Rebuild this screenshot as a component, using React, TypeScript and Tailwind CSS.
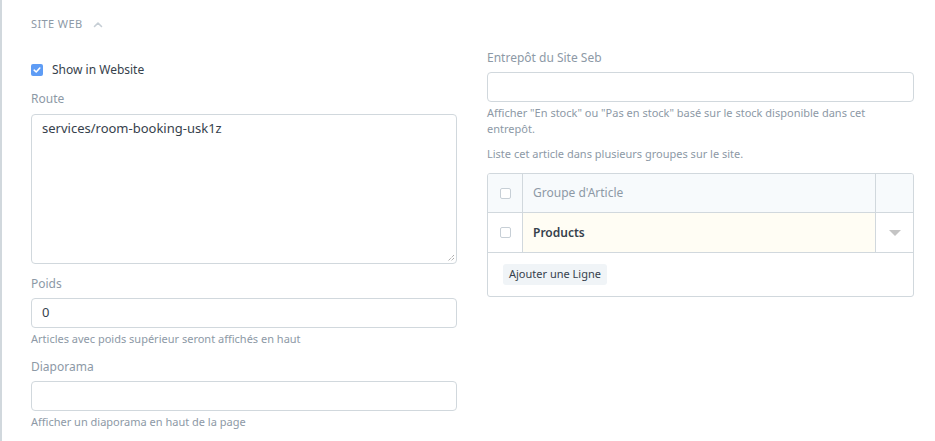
import React from 'react';

const font = { fontFamily: '"Noto Sans", "Open Sans", sans-serif' };

// Champ texte simple avec libellé et aide
const Field: React.FC<{ label: string; value?: string; help?: React.ReactNode }> = ({ label, value, help }) => (
  <div className="mb-[12px]">
    <div className="text-[12px] leading-[16px] text-[#8d99a6] mb-[6px]">{label}</div>
    <div className="h-[30px] rounded-[4px] border border-[#d1d8dd] bg-white px-[10px] flex items-center text-[13px] text-[#36414c]">
      {value}
    </div>
    {help && <div className="mt-[3px] text-[11px] leading-[16px] text-[#8d99a6]">{help}</div>}
  </div>
);

const Box: React.FC<{ checked?: boolean }> = ({ checked }) =>
  checked ? (
    <span className="w-[12px] h-[12px] rounded-[2px] bg-[#5e9cf5] flex items-center justify-center">
      <svg width="8" height="8" viewBox="0 0 8 8" fill="none">
        <path d="M1.2 4.2 L3.2 6 L6.8 2" stroke="white" strokeWidth="1.6" strokeLinecap="round" strokeLinejoin="round" />
      </svg>
    </span>
  ) : (
    <span className="w-[11px] h-[11px] rounded-[2px] border border-[#c7cfd6] bg-white" />
  );

export default function App() {
  return (
    <div style={font} className="w-[935px] h-[441px] bg-white overflow-hidden">
      <div className="h-full border-l-2 border-[#d1d8dd] pl-[29px] pr-[21px]">
        {/* en-tête de section */}
        <div className="h-[49px] flex items-center gap-[10px]">
          <span className="text-[11px] tracking-[0.4px] text-[#8d99a6]">SITE WEB</span>
          <svg width="10" height="7" viewBox="0 0 10 7" fill="none">
            <path d="M1.5 5.5 L5 2 L8.5 5.5" stroke="#c6ced5" strokeWidth="1.6" strokeLinecap="round" strokeLinejoin="round" />
          </svg>
        </div>

        <div className="grid grid-cols-[426px_427px] gap-x-[30px]">
          {/* colonne gauche */}
          <div>
            <div className="mt-[14px] mb-[14px] h-[14px] flex items-center gap-[9px]">
              <Box checked />
              <span className="text-[12px] text-[#36414c]">Show in Website</span>
            </div>
            <div className="text-[12px] leading-[16px] text-[#8d99a6] mb-[7px]">Route</div>
            <div className="relative h-[150px] rounded-[4px] border border-[#d1d8dd] bg-white px-[10px] pt-[4px] text-[13px] text-[#36414c] mb-[12px]">
              services/room-booking-usk1z
              <svg className="absolute right-[1px] bottom-[1px]" width="8" height="8" viewBox="0 0 8 8">
                <path d="M7 1 L1 7 M7 4 L4 7" stroke="#8a8a8a" strokeWidth="1" strokeDasharray="1 1" />
              </svg>
            </div>
            <Field label="Poids" value="0" help="Articles avec poids supérieur seront affichés en haut" />
            <Field label="Diaporama" help="Afficher un diaporama en haut de la page" />
          </div>

          {/* colonne droite */}
          <div>
            <div className="pt-[1px]">
              <Field
                label="Entrepôt du Site Seb"
                help={<>Afficher "En stock" ou "Pas en stock" basé sur le stock disponible dans cet entrepôt.</>}
              />
            </div>
            <div className="-mt-[3px] text-[11px] leading-[16px] text-[#8d99a6] mb-[11px]">
              Liste cet article dans plusieurs groupes sur le site.
            </div>

            <div className="rounded-[3px] border border-[#d1d8dd] overflow-hidden">
              <div className="h-[39px] flex bg-[#f7fafc] border-b border-[#d1d8dd]">
                <div className="w-[35px] flex items-center justify-center border-r border-[#d1d8dd]">
                  <Box />
                </div>
                <div className="flex-1 flex items-center px-[10px] text-[12px] text-[#8d99a6] border-r border-[#d1d8dd]">
                  Groupe d'Article
                </div>
                <div className="w-[37px]" />
              </div>
              <div className="h-[40px] flex border-b border-[#d1d8dd]">
                <div className="w-[35px] flex items-center justify-center border-r border-[#d1d8dd]">
                  <Box />
                </div>
                <div className="flex-1 flex items-center px-[10px] text-[12px] font-semibold text-[#36414c] bg-[#fffdf4] border-r border-[#d1d8dd]">
                  Products
                </div>
                <div className="w-[37px] flex items-center justify-center">
                  <svg width="12" height="6" viewBox="0 0 12 6">
                    <path d="M0 0 H12 L6 6 Z" fill="#c4c4c4" />
                  </svg>
                </div>
              </div>
              <div className="h-[43px] flex items-center px-[15px]">
                <span className="h-[21px] px-[6px] rounded-[3px] bg-[#f0f4f7] text-[11px] text-[#36414c] flex items-center">
                  Ajouter une Ligne
                </span>
              </div>
            </div>
          </div>
        </div>
      </div>
    </div>
  );
}
